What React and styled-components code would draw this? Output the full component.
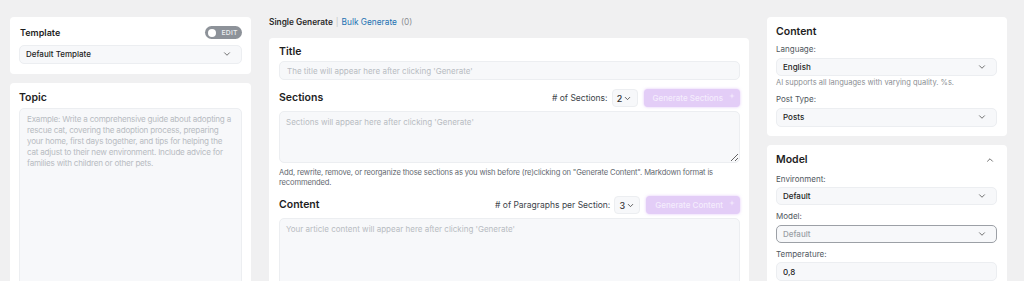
import React from "react";
import styled, { createGlobalStyle } from "styled-components";
import { ChevronDown, ChevronUp } from "lucide-react";

const GlobalStyle = createGlobalStyle`
  html, body {
    margin: 0;
    padding: 0;
    background: #f0f0f1;
    overflow: hidden;
    font-family: Inter, "Noto Sans", sans-serif;
    color: #1e1e1e;
  }
  * { box-sizing: border-box; }
`;

export default function App() {
  return (
    <>
      <GlobalStyle />
      <Page>
        <Column>
          <Card>
            <TopRow>
              <SmallTitle>Template</SmallTitle>
              <Toggle>
                <Knob />
                EDIT
              </Toggle>
            </TopRow>
            <Select $h={18.5} style={{ marginTop: 6 }}>
              <span>Default Template</span>
              <ChevronDown size={10} strokeWidth={2} />
            </Select>
          </Card>
          <Card>
            <Heading>Topic</Heading>
            <TopicArea
              placeholder="Example: Write a comprehensive guide about adopting a rescue cat, covering the adoption process, preparing your home, first days together, and tips for helping the cat adjust to their new environment. Include advice for families with children or other pets."
            />
          </Card>
        </Column>

        <Column>
          <Tabs>
            <b>Single Generate</b>
            <Sep>|</Sep>
            <TabLink>Bulk Generate</TabLink>
            <Count>(0)</Count>
          </Tabs>
          <MainCard>
            <Heading>Title</Heading>
            <TextInput placeholder="The title will appear here after clicking 'Generate'" />

            <SectionRow>
              <Heading>Sections</Heading>
              <Controls>
                <CtrlLabel># of Sections:</CtrlLabel>
                <NumSelect>
                  2 <ChevronDown size={9} strokeWidth={2.2} />
                </NumSelect>
                <GenButton>
                  Generate Sections
                  <Sparkle />
                </GenButton>
              </Controls>
            </SectionRow>
            <TextArea $h={52} placeholder="Sections will appear here after clicking 'Generate'" />
            <Help>
              Add, rewrite, remove, or reorganize those sections as you wish before (re)clicking on "Generate Content". Markdown format is recommended.
            </Help>

            <SectionRow $gap={8}>
              <Heading>Content</Heading>
              <Controls>
                <CtrlLabel># of Paragraphs per Section:</CtrlLabel>
                <NumSelect>
                  3 <ChevronDown size={9} strokeWidth={2.2} />
                </NumSelect>
                <GenButton>
                  Generate Content
                  <Sparkle />
                </GenButton>
              </Controls>
            </SectionRow>
            <TextArea $h={200} $noResize placeholder="Your article content will appear here after clicking 'Generate'" />
          </MainCard>
        </Column>

        <Column>
          <SideCard>
            <Heading>Content</Heading>
            <Label>Language:</Label>
            <Select>
              <span>English</span>
              <ChevronDown size={10} strokeWidth={2} />
            </Select>
            <Hint>AI supports all languages with varying quality. %s.</Hint>
            <Label>Post Type:</Label>
            <Select $h={19}>
              <span>Posts</span>
              <ChevronDown size={10} strokeWidth={2} />
            </Select>
          </SideCard>
          <SideCard>
            <CardHeader>
              <Heading>Model</Heading>
              <ChevronUp size={10} strokeWidth={2} color="#555" />
            </CardHeader>
            <Label>Environment:</Label>
            <Select>
              <span>Default</span>
              <ChevronDown size={10} strokeWidth={2} />
            </Select>
            <Label>Model:</Label>
            <Select $bordered>
              <span>Default</span>
              <ChevronDown size={10} strokeWidth={2} />
            </Select>
            <Label>Temperature:</Label>
            <TempInput defaultValue="0,8" />
          </SideCard>
        </Column>
      </Page>
    </>
  );
}

function Sparkle() {
  return (
    <svg width="6" height="6" viewBox="0 0 10 10" style={{ marginTop: -5 }}>
      <path d="M5 0 L6 4 L10 5 L6 6 L5 10 L4 6 L0 5 L4 4 Z" fill="#f5ecfd" />
    </svg>
  );
}

const Page = styled.div`
  display: grid;
  grid-template-columns: 241px 480px 240px;
  column-gap: 18px;
  padding: 17px 0 0 10px;
  height: 281px;
  align-items: start;
`;

const Column = styled.div`
  display: flex;
  flex-direction: column;
  gap: 9px;
`;

const Card = styled.div`
  background: #fff;
  border-radius: 4px;
  padding: 9px 9px 10px 9px;
  display: flex;
  flex-direction: column;
`;

const SideCard = styled(Card)`
  padding: 9px 10px 9px 9px;
`;

const MainCard = styled.div`
  background: #fff;
  border-radius: 4px;
  padding: 8px 9px 0 10px;
  display: flex;
  flex-direction: column;
  margin-top: 1px;
`;

const TopRow = styled.div`
  display: flex;
  align-items: center;
  justify-content: space-between;
  height: 13px;
  padding-left: 1px;
`;

const SmallTitle = styled.div`
  font-size: 9px;
  font-weight: 600;
`;

const Toggle = styled.div`
  width: 37px;
  height: 13px;
  border-radius: 7px;
  background: #8d9299;
  color: #eceef0;
  font-size: 6.8px;
  font-weight: 500;
  letter-spacing: 0.2px;
  display: flex;
  align-items: center;
  gap: 6px;
  padding-left: 2.5px;
`;

const Knob = styled.span`
  width: 8px;
  height: 8px;
  border-radius: 50%;
  background: #fff;
`;

const Heading = styled.div`
  font-size: 10.5px;
  font-weight: 600;
  line-height: 12px;
  color: #1e1e1e;
`;

const CardHeader = styled.div`
  display: flex;
  align-items: center;
  justify-content: space-between;
  padding-right: 2px;
  height: 12px;
  margin-bottom: 2px;
`;

const Select = styled.div`
  height: ${(p) => p.$h || 18}px;
  border-radius: 5px;
  background: #f7f8fa;
  border: 1px solid ${(p) => (p.$bordered ? "#9ca0a6" : "#eceef1")};
  display: flex;
  align-items: center;
  justify-content: space-between;
  padding: 0 9px 0 6px;
  font-size: 8px;
  font-weight: 500;
  color: ${(p) => (p.$bordered ? "#9a9ea4" : "#1e1e1e")};
  svg { color: #555; }
`;

const TopicArea = styled.textarea`
  margin-top: 4px;
  height: 300px;
  width: 100%;
  resize: none;
  border: 1px solid #eceef1;
  border-radius: 5px;
  background: #f7f8fa;
  padding: 5px 6px 5px 7px;
  font-family: inherit;
  font-size: 8.1px;
  letter-spacing: -0.22px;
  line-height: 11px;
  outline: none;
  &::placeholder { color: #b8bcc2; }
`;

const Tabs = styled.div`
  font-size: 8.3px;
  line-height: 10px;
  color: #2c2c2c;
  display: flex;
  gap: 3px;
  margin-bottom: 1px;
  b { font-weight: 600; }
`;

const Sep = styled.span`
  color: #c4c4c4;
`;

const TabLink = styled.span`
  color: #2271b1;
`;

const Count = styled.span`
  color: #8c8f94;
  margin-left: 1px;
`;

const TextInput = styled.input`
  margin-top: 3px;
  height: 19px;
  width: 100%;
  border: 1px solid #eceef1;
  border-radius: 5px;
  background: #f7f8fa;
  padding: 0 7px;
  font-family: inherit;
  font-size: 8px;
  outline: none;
  &::placeholder { color: #b8bcc2; }
`;

const SectionRow = styled.div`
  display: flex;
  align-items: center;
  justify-content: space-between;
  margin-top: ${(p) => p.$gap || 9}px;
  height: 18px;
`;

const Controls = styled.div`
  display: flex;
  align-items: center;
`;

const CtrlLabel = styled.span`
  font-size: 8.5px;
  color: #3c434a;
  margin-right: 4px;
`;

const NumSelect = styled.div`
  height: 18px;
  width: 26px;
  border-radius: 4px;
  background: #f7f8fa;
  border: 1px solid #eceef1;
  display: flex;
  align-items: center;
  justify-content: center;
  gap: 1px;
  font-size: 9px;
  font-weight: 500;
  color: #333;
  margin-right: 6px;
  svg { color: #444; }
`;

const GenButton = styled.div`
  height: 18px;
  border-radius: 4px;
  background: #e3cdf7;
  box-shadow: 0 0 3px rgba(205, 160, 245, 0.6);
  color: #f4ecfd;
  font-size: 8px;
  font-weight: 500;
  display: flex;
  align-items: center;
  gap: 6px;
  padding: 0 5px 0 9px;
`;

const TextArea = styled.textarea`
  margin-top: 4px;
  height: ${(p) => p.$h}px;
  width: 100%;
  resize: ${(p) => (p.$noResize ? "none" : "vertical")};
  border: 1px solid #eceef1;
  border-radius: 5px;
  background: #f7f8fa;
  padding: 5px 6px;
  font-family: inherit;
  font-size: 8px;
  line-height: 11px;
  outline: none;
  display: block;
  &::placeholder { color: #b8bcc2; }
`;

const Help = styled.div`
  margin-top: 5px;
  font-size: 7.6px;
  letter-spacing: -0.15px;
  line-height: 10px;
  color: #646970;
`;

const Label = styled.div`
  font-size: 8px;
  line-height: 11px;
  color: #50575e;
  margin-top: 6px;
  margin-bottom: 2.5px;
`;

const Hint = styled.div`
  font-size: 7.5px;
  line-height: 11px;
  color: #8c8f94;
  margin-top: 1.5px;
`;

const TempInput = styled.input`
  height: 19px;
  width: 100%;
  border: 1px solid #eceef1;
  border-radius: 5px;
  background: #f7f8fa;
  padding: 0 6px;
  font-family: inherit;
  font-size: 8px;
  font-weight: 500;
  color: #1e1e1e;
  outline: none;
`;
